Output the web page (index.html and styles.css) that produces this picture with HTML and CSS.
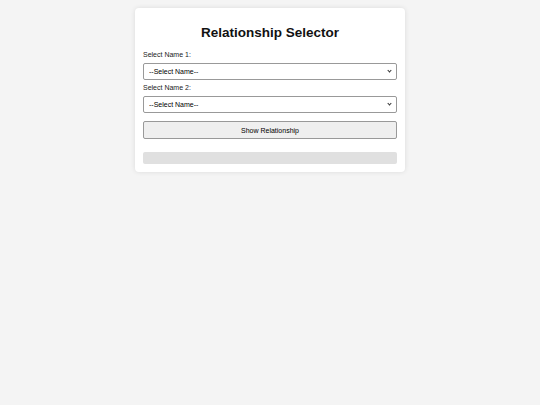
FILE: index.html
```html
<!DOCTYPE html>
<html lang="en">
<head>
    <meta charset="UTF-8">
    <meta name="viewport" content="width=device-width, initial-scale=1.0">
    <title>Relationship Selector</title>
    <link rel="stylesheet" href="styles.css">
</head>
<body>
    <div class="container">
        <h1>Relationship Selector</h1>

        <label for="name1">Select Name 1:</label>
        <div class="select-wrap">
            <select id="name1">
                <option value="">--Select Name--</option>
            </select>
        </div>

        <label for="name2">Select Name 2:</label>
        <div class="select-wrap">
            <select id="name2">
                <option value="">--Select Name--</option>
            </select>
        </div>

        <button>Show Relationship</button>

        <div id="result" class="result"></div>
    </div>
</body>
</html>
```

FILE: styles.css
```css
body {
    font-family: "Liberation Sans", Arial, sans-serif;
    background-color: #f4f4f4;
    margin: 0;
    padding: 8px 0;
}
.container {
    background: white;
    width: 254px;
    margin: 0 auto;
    padding: 8px;
    border-radius: 4px;
    box-shadow: 0 0 5px rgba(0, 0, 0, 0.1);
}
h1 {
    font-size: 13.5px;
    line-height: 16px;
    text-align: center;
    margin: 9px 0 10px;
    color: #111;
}
label {
    display: block;
    font-size: 7px;
    line-height: 8px;
    margin-bottom: 4px;
    color: #222;
}
.select-wrap {
    position: relative;
    margin-bottom: 4px;
}
/* small chevron like the native one */
.select-wrap::after {
    content: "";
    position: absolute;
    right: 6px;
    top: 6px;
    width: 2px;
    height: 2px;
    border-right: 1px solid #333;
    border-bottom: 1px solid #333;
    transform: rotate(45deg);
    pointer-events: none;
}
select {
    display: block;
    width: 100%;
    height: 17px;
    font-size: 7px;
    padding: 0 5px;
    border: 1px solid #999;
    border-radius: 2px;
    background: white;
    color: black;
    font-family: inherit;
    appearance: none;
    -webkit-appearance: none;
}
button {
    display: block;
    width: 100%;
    height: 18px;
    margin-top: 8px;
    font-size: 7px;
    font-family: inherit;
    background-color: #efefef;
    border: 1px solid #999;
    border-radius: 2px;
    color: black;
}
.result {
    margin-top: 13px;
    height: 12px;
    background-color: #e0e0e0;
    border-radius: 2px;
}
```
